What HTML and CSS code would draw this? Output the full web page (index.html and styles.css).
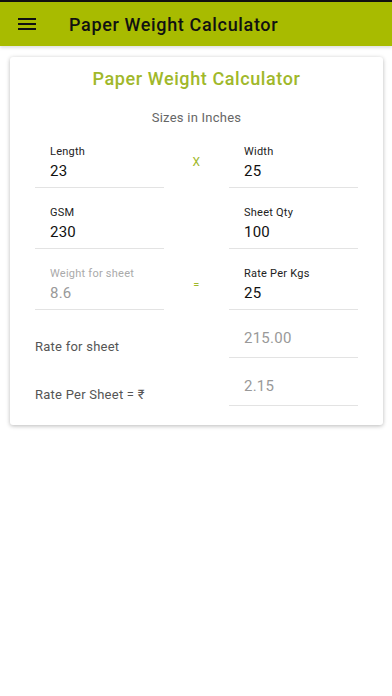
FILE: index.html
```html
<!DOCTYPE html>
<html>
<head>
<meta charset="utf-8">
<link rel="stylesheet" href="styles.css">
</head>
<body>
<div class="status"></div>
<header class="appbar">
  <svg class="menu" width="24" height="24" viewBox="0 0 24 24"><path d="M3 6h18v2H3zM3 11h18v2H3zM3 16h18v2H3z" fill="#111"/></svg>
  <div class="appbar-title">Paper Weight Calculator</div>
</header>
<main class="card">
  <h1 class="card-title">Paper Weight Calculator</h1>
  <div class="subtitle">Sizes in Inches</div>
  <div class="rows">
    <div class="row">
      <div class="field"><div class="label">Length</div><div class="value">23</div></div>
      <div class="op">X</div>
      <div class="field"><div class="label">Width</div><div class="value">25</div></div>
    </div>
    <div class="row">
      <div class="field"><div class="label">GSM</div><div class="value">230</div></div>
      <div class="op"></div>
      <div class="field"><div class="label">Sheet Qty</div><div class="value">100</div></div>
    </div>
    <div class="row">
      <div class="field disabled"><div class="label">Weight for sheet</div><div class="value">8.6</div></div>
      <div class="op op-eq">=</div>
      <div class="field"><div class="label">Rate Per Kgs</div><div class="value">25</div></div>
    </div>
  </div>
  <div class="result-row">
    <div class="result-label">Rate for sheet</div>
    <div class="result-field">215.00</div>
  </div>
  <div class="result-row">
    <div class="result-label">Rate Per Sheet = ₹</div>
    <div class="result-field">2.15</div>
  </div>
</main>
</body>
</html>
```
FILE: styles.css
```css
* { box-sizing: border-box; }
html, body { margin: 0; padding: 0; background: #fff; }
body { font-family: Roboto, "Noto Sans", sans-serif; width: 392px; height: 696px; overflow: hidden; letter-spacing: 0.015em; }
.status { height: 2px; background: #111; }
.appbar {
  height: 44px;
  background: #a8bb00;
  display: flex;
  align-items: center;
  padding-left: 15px;
  box-shadow: 0 2px 3px rgba(0,0,0,0.12);
}
.menu { display: block; margin-right: 30px; }
.appbar-title { font-size: 18px; font-weight: 500; color: #111; letter-spacing: 0.65px; padding-top: 1px; }
.card {
  margin: 11px 9px 0 10px;
  background: #fff;
  border-radius: 3px;
  box-shadow: 0 1px 4px rgba(0,0,0,0.28);
  padding: 10px 25px 19px;
}
.card-title {
  margin: 0;
  text-align: center;
  font-size: 18px;
  line-height: 24px;
  font-weight: 500;
  color: #a0b82a;
  letter-spacing: 0.6px;
}
.subtitle {
  margin-top: 17px;
  text-align: center;
  font-size: 13px;
  line-height: 20px;
  color: #666;
}
.rows { display: flex; flex-direction: column; gap: 18px; margin-top: 17px; }
.row { display: flex; }
.field {
  width: 129px;
  padding: 0 0 6px 15px;
  border-bottom: 1px solid #e3e3e3;
}
.label { font-size: 11px; line-height: 14px; color: #222; }
.value { font-size: 15px; line-height: 20px; color: #111; margin-top: 2px; }
.disabled .label { color: #aaa; }
.disabled .value { color: #999; }
.op {
  width: 65px;
  text-align: center;
  font-size: 12px;
  line-height: 12px;
  padding-top: 11px;
  color: #a0b82a;
}
.op-eq { padding-top: 12px; font-size: 11px; }
.result-row { display: flex; justify-content: space-between; }
.result-label {
  font-size: 13px;
  line-height: 20px;
  color: #555;
  margin-top: 27px;
}
.result-field {
  width: 129px;
  padding: 18px 0 9px 15px;
  font-size: 15px;
  line-height: 20px;
  color: #999;
  border-bottom: 1px solid #e3e3e3;
}
```
